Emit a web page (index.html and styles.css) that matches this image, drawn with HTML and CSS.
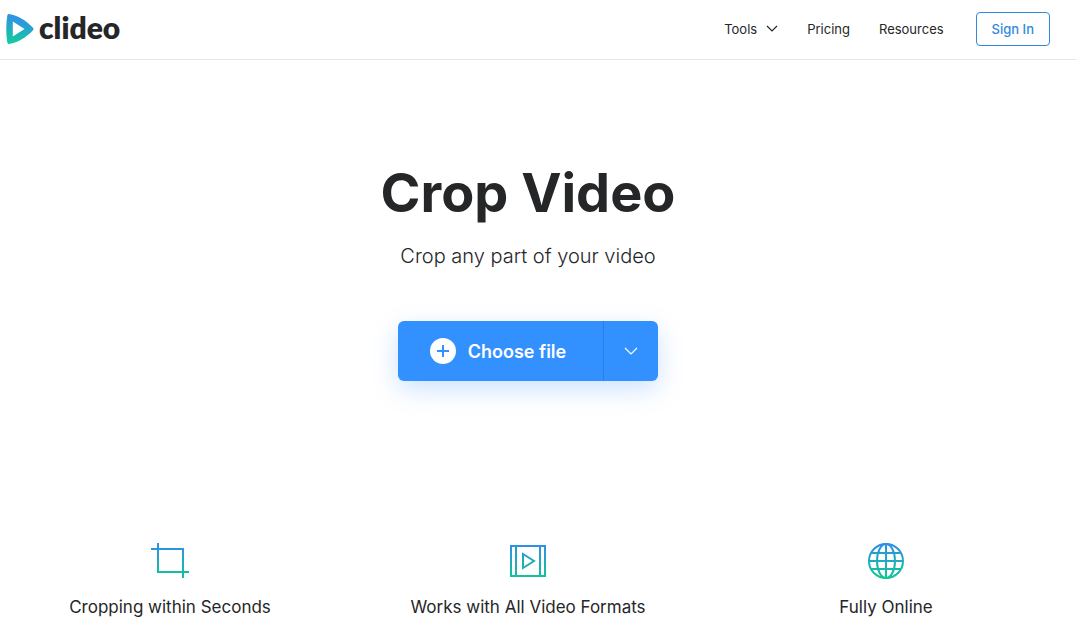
FILE: index.html
```html
<!DOCTYPE html>
<html lang="en">
<head>
  <meta charset="UTF-8" />
  <title>Crop Video - Clideo</title>
  <meta name="viewport" content="width=device-width, initial-scale=1.0" />
  <link rel="stylesheet" href="styles.css">
</head>
<body>

  <header class="header">
    <a class="logo" href="#">
      <svg class="logo-mark" viewBox="0 0 28 32" width="28" height="32" aria-hidden="true">
        <defs>
          <linearGradient id="logo-gradient" x1="0.2" y1="0" x2="0" y2="1">
            <stop offset="0.1" stop-color="#2f94e4" />
            <stop offset="0.85" stop-color="#12c8a0" />
          </linearGradient>
        </defs>
        <path fill="url(#logo-gradient)" fill-rule="evenodd" d="M3 1C12 2.5 20 7.500 27 14.800Q28 16 27 17.200C20 24.500 12 29.500 3 31Q1.600 31 1.300 29.600Q-0.800 16 1.300 2.400Q1.600 1 3 1ZM6.800 8.500V23.500L18.500 16Z" />
      </svg>
      <span class="logo-text">clideo</span>
    </a>

    <nav class="nav">
      <button class="nav-item" type="button">
        Tools
        <svg viewBox="0 0 12 8" width="12" height="8" fill="none" stroke="currentColor" stroke-width="1.2" aria-hidden="true"><path d="M1 1L6 6L11 1" /></svg>
      </button>
      <a class="nav-item" href="#">Pricing</a>
      <a class="nav-item" href="#">Resources</a>
      <a class="sign-in" href="#">Sign In</a>
    </nav>
  </header>

  <main class="main">
    <section class="hero">
      <h1>Crop Video</h1>
      <p class="subtitle">Crop any part of your video</p>
      <div class="upload">
        <button class="upload-file" type="button">
          <svg viewBox="0 0 26 26" width="26" height="26" aria-hidden="true">
            <circle cx="13" cy="13" r="13" fill="#fff" />
            <path d="M13 7V19M7 13H19" stroke="#3290ff" stroke-width="2" />
          </svg>
          Choose file
        </button>
        <button class="upload-more" type="button" aria-label="More upload options">
          <svg viewBox="0 0 14 8" width="14" height="8" fill="none" stroke="#fff" stroke-width="1.2" aria-hidden="true"><path d="M1 1L7 7L13 1" /></svg>
        </button>
      </div>
    </section>

    <!-- Features -->
    <section class="features">
      <div class="feature">
        <svg class="feature-icon" viewBox="0 0 38 38" width="38" height="38" aria-hidden="true">
          <defs>
            <linearGradient id="icon-gradient" gradientUnits="userSpaceOnUse" x1="0" y1="1" x2="0" y2="37">
              <stop offset="0" stop-color="#2f8ded" />
              <stop offset="1" stop-color="#10c890" />
            </linearGradient>
          </defs>
          <path d="M7 1V30H38M0 7H32V36" />
        </svg>
        <h2>Cropping within Seconds</h2>
      </div>
      <div class="feature">
        <svg class="feature-icon" viewBox="0 0 38 38" width="38" height="38" aria-hidden="true">
          <path d="M2 4H36V34H2ZM7 4V34M31 4V34M14 12V26L25 19Z" />
        </svg>
        <h2>Works with All Video Formats</h2>
      </div>
      <div class="feature">
        <svg class="feature-icon" viewBox="0 0 38 38" width="38" height="38" aria-hidden="true">
          <circle cx="19" cy="19" r="17" />
          <ellipse cx="19" cy="19" rx="9" ry="17" />
          <path d="M19 2V36M4 11H34M2 19H36M4 27H34" />
        </svg>
        <h2>Fully Online</h2>
      </div>
    </section>
  </main>

</body>
</html>
```
FILE: styles.css
```css
* {
  box-sizing: border-box;
}
body {
  font-family: Inter, "Liberation Sans", sans-serif;
  background: #fff;
  color: #252628;
  margin: 0;
}
a {
  text-decoration: none;
}
button {
  font-family: inherit;
  border: none;
  background: none;
  padding: 0;
  cursor: pointer;
}
.header {
  display: flex;
  align-items: center;
  justify-content: space-between;
  height: 60px;
  padding: 0 26px 2px 6px;
  border-bottom: 1px solid #e7e7e7;
}
.logo {
  display: flex;
  align-items: center;
  gap: 5px;
  color: #252628;
}
.logo-text {
  padding-bottom: 4px;
  font-family: Lato, sans-serif;
  font-size: 30px;
  font-weight: 800;
  line-height: 28px;
}
.nav {
  display: flex;
  align-items: center;
  gap: 29px;
  font-size: 13px;
}
.nav-item {
  display: flex;
  align-items: center;
  gap: 9px;
  font-size: 13px;
  color: #252628;
}
.sign-in {
  margin-left: 3px;
  padding: 8px 15px;
  border: 1px solid #2f8ae0;
  border-radius: 4px;
  line-height: 16px;
  font-weight: 500;
  color: #2f8ae0;
}
.main {
  padding-right: 20px;
}
.hero {
  display: flex;
  flex-direction: column;
  align-items: center;
  padding-top: 100px;
  text-align: center;
}
h1 {
  margin: 0;
  font-size: 54px;
  font-weight: 700;
  line-height: 66px;
}
.subtitle {
  margin: 16px 0 0;
  font-size: 20px;
  font-weight: 300;
  line-height: 28px;
}
.upload {
  display: flex;
  height: 60px;
  margin-top: 51px;
  border-radius: 6px;
  background: #3290ff;
  box-shadow: 0 8px 24px rgba(50, 144, 255, 0.25);
}
.upload-file {
  display: flex;
  align-items: center;
  gap: 12px;
  padding: 0 37px 0 32px;
  font-size: 18px;
  font-weight: 600;
  color: #fff;
}
.upload-more {
  display: flex;
  align-items: center;
  justify-content: center;
  width: 55px;
  border-left: 1px solid #2a7fe6;
}
.features {
  display: grid;
  grid-template-columns: repeat(3, 1fr);
  gap: 18px;
  padding-top: 161px;
}
.feature {
  display: flex;
  flex-direction: column;
  align-items: center;
}
.feature-icon {
  fill: none;
  stroke: url(#icon-gradient);
  stroke-width: 2;
}
h2 {
  margin: 15px 0 0;
  font-size: 17px;
  font-weight: 400;
  line-height: 24px;
}
```
